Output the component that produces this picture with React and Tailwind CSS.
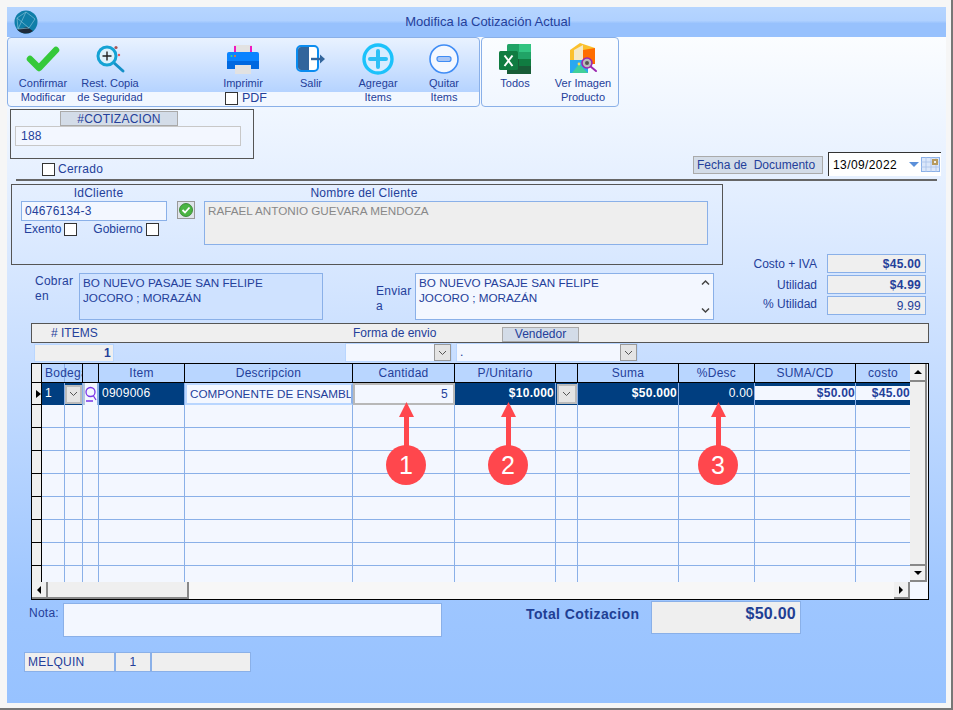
const navy = 'text-[#24409a]';

const rowGrid = 'grid grid-cols-[10px_23px_18px_16px_86px_168px_102px_101px_22px_101px_76px_101px_54px]';

const headers = ['', 'Bodega', '', 'Item', 'Descripcion', 'Cantidad', 'P/Unitario', '', 'Suma', '%Desc', 'SUMA/CD', 'costo'];
const columns = [0, 1, 2, 3, 4, 5, 6, 7, 8, 9, 10, 11, 12];

const emptyRows = ['h-[23px]', 'h-[23px]', 'h-[23px]', 'h-[23px]', 'h-[23px]', 'h-[23px]', 'h-[23px]', 'h-[16px]'];

const upper = 'text-[11.7px] tracking-normal';

function Check({ className = '' }) {
  return <span className={`block w-[13px] h-[13px] bg-white border border-[#333] shrink-0 ${className}`} />;
}

function ComboArrow({ className = '' }) {
  return (
    <span className={`flex items-center justify-center bg-[#e4e4e4] border border-[#999] shrink-0 ${className}`}>
      <svg width="9" height="6" viewBox="0 0 9 6" fill="none" stroke="#555" strokeWidth="1">
        <path d="M1 1l3.500 3.500L8 1" />
      </svg>
    </span>
  );
}

function ConfirmIcon() {
  return (
    <svg width="34" height="28" viewBox="0 0 34 28">
      <path d="M4 14l9 9L30 5" fill="none" stroke="#35c93a" strokeWidth="6.500" strokeLinecap="round" strokeLinejoin="round" />
    </svg>
  );
}

function RestoreIcon() {
  return (
    <svg width="32" height="30" viewBox="0 0 32 30">
      <path d="M19 18l10 9" stroke="#1590c8" strokeWidth="3" strokeLinecap="round" />
      <circle cx="13" cy="12" r="9" fill="#dff1fb" stroke="#15a2d4" strokeWidth="3" />
      <path d="M13 7.500v9M8.500 12h9" stroke="#222" strokeWidth="1.400" />
      <circle cx="22" cy="3.500" r="1.600" fill="#a55" />
      <circle cx="25" cy="11" r="1.200" fill="#e55" />
    </svg>
  );
}

function PrinterIcon() {
  return (
    <svg width="34" height="30" viewBox="0 0 34 30">
      <rect x="8" y="1" width="18" height="9" fill="#e2e2e2" />
      <rect x="8" y="2" width="2" height="7" fill="#f018c0" />
      <rect x="24" y="2" width="2" height="7" fill="#f018c0" />
      <path d="M3 8h28a2 2 0 0 1 2 2v13a2 2 0 0 1-2 2H3a2 2 0 0 1-2-2V10a2 2 0 0 1 2-2z" fill="#0a84ff" />
      <rect x="1" y="17" width="32" height="8" fill="#0068e0" />
      <rect x="9" y="21" width="16" height="9" fill="#e2e2e2" />
      <circle cx="5.500" cy="12" r="1" fill="#3ddc84" />
      <circle cx="9" cy="12" r="1" fill="#ff7a1a" />
    </svg>
  );
}

function ExitIcon() {
  return (
    <svg width="30" height="28" viewBox="0 0 30 28">
      <rect x="1" y="1" width="21" height="25" rx="4" fill="#fff" stroke="#0a8cf0" strokeWidth="2" />
      <path d="M2 5a3 3 0 0 1 3-3h8v23H5a3 3 0 0 1-3-3z" fill="#32659c" />
      <path d="M15 14h11" stroke="#32659c" strokeWidth="2.400" />
      <path d="M24 9.500l5 4.500-5 4.500z" fill="#32659c" />
    </svg>
  );
}

function PlusIcon() {
  return (
    <svg width="32" height="32" viewBox="0 0 32 32">
      <circle cx="16" cy="16" r="14" fill="#d7ecff" stroke="#1cc2fb" strokeWidth="3.400" />
      <path d="M16 8v16M8 16h16" stroke="#2cc0f6" strokeWidth="4" strokeLinecap="round" />
    </svg>
  );
}

function MinusIcon() {
  return (
    <svg width="30" height="30" viewBox="0 0 30 30">
      <circle cx="15" cy="15" r="14" fill="#f4f8ff" stroke="#3f8cf5" strokeWidth="1.600" />
      <rect x="8" y="12.500" width="14" height="5" rx="2.200" fill="#a9c6f5" stroke="#3f8cf5" strokeWidth="1.200" />
    </svg>
  );
}

function ExcelIcon() {
  return (
    <svg width="32" height="30" viewBox="0 0 32 30">
      <rect x="8" y="0" width="24" height="30" rx="1.500" fill="#21a366" />
      <rect x="20" y="0" width="12" height="8" fill="#33c481" />
      <rect x="20" y="8" width="12" height="7" fill="#21a366" />
      <rect x="20" y="15" width="12" height="7" fill="#107c41" />
      <rect x="8" y="15" width="12" height="7" fill="#185c37" />
      <rect x="8" y="22" width="24" height="8" fill="#185c37" />
      <rect x="0" y="7" width="19" height="19" rx="1.500" fill="#107c41" />
      <path d="M5.500 11.500l8 10.500M13.500 11.500l-8 10.500" stroke="#fff" strokeWidth="2" />
    </svg>
  );
}

function ImageIcon() {
  return (
    <svg width="32" height="32" viewBox="0 0 32 32">
      <path d="M3 7l10-7 15 5v15H3z" fill="#fbc02d" />
      <path d="M7 7l9-5v17H7z" fill="#f4e9c8" />
      <path d="M16 7l12-2v16H16z" fill="#ff6d00" />
      <rect x="3" y="17" width="18" height="13" fill="#29a8f0" />
      <path d="M5 30l7-9 9 9z" fill="#41cf9a" />
      <circle cx="12" cy="21" r="1.400" fill="#ffd54f" />
      <path d="M23 23l6 5" stroke="#9c27b0" strokeWidth="2" strokeLinecap="round" />
      <circle cx="20" cy="20" r="5" fill="#bbb" stroke="#9c27b0" strokeWidth="1.600" />
      <circle cx="20" cy="20" r="2" fill="#555" />
    </svg>
  );
}

function ToolButton({ icon, lines, className = '', children }) {
  return (
    <div className={`flex flex-col items-center text-[11px] leading-[14px] tracking-normal ${navy} ${className}`}>
      <div className="h-[33px] mt-[4px] flex items-center justify-center">{icon}</div>
      <div className="mt-[1px] text-center whitespace-nowrap">
        {lines.map((l) => (
          <div key={l}>{l}</div>
        ))}
      </div>
      {children}
    </div>
  );
}

function StatRow({ label, value, bold, labelClass = '' }) {
  return (
    <div className="flex items-center justify-end">
      <span className={`text-[12px] tracking-normal ${navy} mr-[10px] ${labelClass}`}>{label}</span>
      <div
        className={`w-[99px] h-[19px] bg-[#efefef] border border-[#8ab0e8] text-right pr-[4px] text-[12px] leading-[18px] ${navy} ${bold ? 'font-bold' : ''}`}
      >
        {value}
      </div>
    </div>
  );
}

function Callout({ n, className }) {
  return (
    <div className={`absolute top-[402px] w-[40px] flex flex-col items-center ${className}`}>
      <svg width="15" height="44" viewBox="0 0 15 44">
        <path d="M7.500 0L15 15H10V44H5V15H0z" fill="#ff474d" />
      </svg>
      <div className="w-[40px] h-[40px] -mt-[1px] rounded-full bg-[#ff474d] text-white text-[25px] tracking-normal leading-[40px] text-center">
        {n}
      </div>
    </div>
  );
}

function GridHeader() {
  return (
    <div className={`${rowGrid} h-[19px] border-b border-black`}>
      {headers.map((h, i) => (
        <div
          key={i}
          className={`border-r border-black text-[12px] leading-[18px] whitespace-nowrap overflow-hidden ${navy} ${
            i === 0 ? 'bg-[#efefef]' : 'bg-[#b9d6ff] text-center'
          } ${i === 1 ? 'col-span-2 text-left pl-[3px] bg-[linear-gradient(to_right,#b9d6ff_22px,#8ab0e8_22px,#8ab0e8_23px,#b9d6ff_23px)]' : ''} ${
            i === 11 ? 'border-r-0' : ''
          }`}
        >
          {h}
        </div>
      ))}
    </div>
  );
}

function SelectedRow() {
  const dark = 'bg-[#003e80] text-white border-r border-[#8ab0e8] text-[12px] leading-[21px] whitespace-nowrap overflow-hidden';
  return (
    <div className={`${rowGrid} h-[22px] border-b border-[#8ab0e8]`}>
      <div className="bg-[#efefef] border-r border-b border-black flex items-center justify-end">
        <span className="border-y-[4px] border-l-[5px] border-y-transparent border-l-black" />
      </div>
      <div className={`${dark} pl-[3px]`}>1</div>
      <div className={`${dark} flex items-center`}>
        <ComboArrow className="w-[17px] h-[19px] border-2 border-[#bbb]" />
      </div>
      <div className="bg-[#f3f7ff] border-x-2 border-[#b4c6de] border-r-[#8ab0e8] flex items-center justify-center">
        <svg width="12" height="16" viewBox="0 0 12 16" fill="none" stroke="#7a35e8" strokeWidth="1.300">
          <circle cx="5.500" cy="6" r="4.500" />
          <path d="M8.500 10l2.500 4M1 15h7" />
        </svg>
      </div>
      <div className={`${dark} pl-[3px]`}>0909006</div>
      <div className={`bg-[#f3f7ff] border-2 border-[#b9d6ff] border-r-[#8ab0e8] pl-[3px] leading-[18px] overflow-hidden whitespace-nowrap ${upper} ${navy}`}>
        COMPONENTE DE ENSAMBLE
      </div>
      <div className={`bg-[#f3f7ff] border-2 border-[#b8b8b8] text-right pr-[5px] text-[12px] leading-[18px] ${navy}`}>5</div>
      <div className={`${dark} text-right pr-[1px] font-bold`}>$10.000</div>
      <div className={`${dark} flex items-center justify-center`}>
        <ComboArrow className="w-[20px] h-[20px] border-2 border-[#bbb]" />
      </div>
      <div className={`${dark} text-right pr-[1px] font-bold`}>$50.000</div>
      <div className={`${dark} text-right pr-[1px]`}>0.00</div>
      <div className="border-r border-[#8ab0e8] bg-[#003e80] pt-[3px] pb-[4px]">
        <div className={`h-[14px] bg-[#f3f7ff] text-right font-bold text-[12px] leading-[14px] ${navy}`}>$50.00</div>
      </div>
      <div className="bg-[#003e80] pt-[3px] pb-[4px]">
        <div className={`h-[14px] bg-[#f3f7ff] text-right font-bold text-[12px] leading-[14px] ${navy}`}>$45.00</div>
      </div>
    </div>
  );
}

function ItemsGrid() {
  return (
    <div className="w-[898px] h-[237px] ml-[24px] border border-black flex flex-col">
      <div className="flex h-[218px]">
        <div className="w-[878px] bg-[#f3f7ff] overflow-hidden">
          <GridHeader />
          <SelectedRow />
          {emptyRows.map((h, r) => (
            <div key={r} className={`${rowGrid} ${h} ${r < 7 ? 'border-b border-[#8ab0e8]' : ''}`}>
              {columns.map((i) => (
                <div
                  key={i}
                  className={
                    i === 0
                      ? `bg-[#efefef] border-r border-black ${r < 7 ? 'border-b border-b-black -mb-[1px]' : ''}`
                      : i === 12
                        ? ''
                        : 'border-r border-[#8ab0e8]'
                  }
                />
              ))}
            </div>
          ))}
        </div>
        <div className="w-[18px] pr-[1px] flex flex-col bg-[#f3f7ff]">
          <div className="h-[18px] flex items-center justify-center bg-[#f0f0f0] border-b-2 border-r-2 border-[#888]">
            <span className="border-x-[4px] border-b-[4px] border-x-transparent border-b-black" />
          </div>
          <div className="flex-1 bg-[#efefef] border-b-2 border-r-2 border-[#888]" />
          <div className="h-[16px] flex items-center justify-center bg-[#f0f0f0] border-b-2 border-r-2 border-[#888]">
            <span className="border-x-[4px] border-t-[4px] border-x-transparent border-t-black" />
          </div>
        </div>
      </div>
      <div className="flex h-[17px] bg-[#f3f7ff]">
        <div className="w-[16px] flex items-center justify-center bg-[#f0f0f0] border-b-2 border-r-2 border-[#888]">
          <span className="border-y-[4px] border-r-[4px] border-y-transparent border-r-black" />
        </div>
        <div className="w-[141px] bg-[#efefef] border-b-2 border-r-2 border-[#888]" />
        <div className="flex-1 bg-[#f7f7f7]" />
        <div className="w-[16px] flex items-center justify-center bg-[#f0f0f0] border-b-2 border-r-2 border-[#888]">
          <span className="border-y-[4px] border-l-[4px] border-y-transparent border-l-black" />
        </div>
        <div className="w-[18px]" />
      </div>
    </div>
  );
}

export default function App() {
  return (
    <div
      className={`relative w-[953px] h-[710px] bg-[#f6f6f6] border-b-2 border-r-2 border-[#777] pt-[7px] pl-[7px] font-['Liberation_Sans',Arial,sans-serif] tracking-[0.25px] overflow-hidden`}
    >
      <div className="w-[939px] h-[696px] flex flex-col bg-[linear-gradient(#fbfdff_30px,#e6f0ff_170px,#c8deff_350px,#9ec6ff_590px,#97c2ff_696px)]">
        {/* title */}
        <div className="h-[30px] flex items-center shrink-0 bg-[linear-gradient(#b6d5ff,#b0d1ff_45%,#97c1fd_55%,#97c1fd)]">
          <svg className="ml-[7px]" width="24" height="24" viewBox="0 0 24 24">
            <circle cx="12" cy="12" r="11.500" fill="#0f7ea8" />
            <path d="M3 19.500a11.500 11.500 0 0 0 16 1.500l-6-4z" fill="#1f2a3a" />
            <path d="M3 8l9-6 9 7-6 9-11 1zM3 8l12 10M12 2L4 19" fill="none" stroke="#7fbdd6" strokeWidth="0.700" />
          </svg>
          <div className={`flex-1 text-center text-[13px] tracking-normal mr-[8px] ${navy}`}>Modifica la Cotización Actual</div>
        </div>

        {/* toolbar */}
        <div className="flex h-[70px] shrink-0">
          <div className="w-[473px] flex rounded-[4px] border border-[#8ab0e8] bg-[linear-gradient(#e9f2ff_0,#b5d3ff_54px,#f2f7ff_54px)]">
            <ToolButton className="w-[70px]" icon={<ConfirmIcon />} lines={['Confirmar', 'Modificar']} />
            <ToolButton className="w-[64px]" icon={<RestoreIcon />} lines={['Rest. Copia', 'de Seguridad']} />
            <div className="w-[68px]" />
            <ToolButton className="w-[66px]" icon={<PrinterIcon />} lines={['Imprimir']}>
              <div className="flex items-center gap-[4px] text-[12.500px] leading-[14px] mt-[1px] ml-[6px]">
                <Check />
                PDF
              </div>
            </ToolButton>
            <ToolButton className="w-[70px]" icon={<ExitIcon />} lines={['Salir']} />
            <ToolButton className="w-[64px]" icon={<PlusIcon />} lines={['Agregar', 'Items']} />
            <ToolButton className="w-[68px]" icon={<MinusIcon />} lines={['Quitar', 'Items']} />
          </div>
          <div className="w-[138px] ml-[1px] flex rounded-[4px] border border-[#8ab0e8]">
            <ToolButton className="w-[66px]" icon={<ExcelIcon />} lines={['Todos']} />
            <ToolButton className="w-[70px]" icon={<ImageIcon />} lines={['Ver Imagen', 'Producto']} />
          </div>
        </div>

        {/* cotizacion + fecha */}
        <div className="flex justify-between h-[72px] shrink-0">
          <div>
            <div className="w-[244px] h-[50px] ml-[3px] mt-[2px] border border-[#555] pt-[1px]">
              <div className={`w-[118px] h-[15px] ml-[49px] bg-[#d3dce8] border border-[#aaa] text-center text-[12px] leading-[14px] ${navy}`}>
                #COTIZACION
              </div>
              <div className={`w-[226px] h-[20px] ml-[4px] bg-[#f3f7ff] border border-[#c8c8c8] pl-[5px] text-[12px] leading-[18px] ${navy}`}>
                188
              </div>
            </div>
            <div className={`flex items-center gap-[3px] ml-[35px] mt-[4px] text-[12px] leading-[13px] ${navy}`}>
              <Check />
              Cerrado
            </div>
          </div>
          <div className="flex items-start mt-[45px] mr-[5px]">
            <div className={`w-[130px] h-[18px] mt-[4px] bg-[#d3dce8] border border-[#aaa] pl-[3px] text-[12px] tracking-normal leading-[17px] whitespace-pre ${navy}`}>
              Fecha de  Documento
            </div>
            <div className="w-[113px] h-[24px] ml-[5px] bg-white border-t border-l border-[#333] flex items-center pl-[4px] text-[12px] tracking-[0.4px] text-black">
              13/09/2022
              <span className="ml-auto mr-[1px] flex items-center gap-[2px] pl-[5px]">
                <span className="border-x-[5px] border-t-[5px] border-x-transparent border-t-[#5b8fd9]" />
                <svg width="19" height="15" viewBox="0 0 19 15">
                  <rect x="0.500" y="0.500" width="18" height="14" fill="#dbe7fa" stroke="#8ab0e8" />
                  <path d="M0 5h19M0 10h19M5 0v15M10 0v15M15 0v15" stroke="#a9c3ea" strokeWidth="0.800" />
                  <rect x="11" y="2" width="6" height="6" fill="#b79a5e" />
                  <rect x="13" y="4" width="2" height="2" fill="#eee" />
                </svg>
              </span>
            </div>
          </div>
        </div>

        <div className="h-[2px] w-[921px] ml-[9px] bg-[#666] shrink-0" />

        {/* client */}
        <div className="flex shrink-0 mt-[3px] h-[81px]">
          <div className="w-[712px] h-[81px] ml-[4px] border border-[#555] flex">
            <div className="w-[155px] ml-[9px] shrink-0">
              <div className={`text-center text-[12px] leading-[15px] mt-[1px] ${navy}`}>IdCliente</div>
              <div className={`w-[146px] h-[20px] bg-[#f3f7ff] border border-[#8ab0e8] pl-[3px] text-[12px] leading-[18px] ${navy}`}>
                04676134-3
              </div>
              <div className={`flex items-center text-[12px] tracking-normal leading-[16px] ${navy}`}>
                <span className="ml-[3px]">Exento</span>
                <Check className="ml-[3px]" />
                <span className="ml-[16px]">Gobierno</span>
                <Check className="ml-[3px]" />
              </div>
            </div>
            <div className="w-[18px] h-[18px] ml-[1px] mt-[16px] bg-[#dfe4ea] border border-[#999] flex items-center justify-center">
              <svg width="14" height="14" viewBox="0 0 14 14">
                <circle cx="7" cy="7" r="6.500" fill="#4bb543" stroke="#2c7a26" strokeWidth="0.800" />
                <path d="M3.500 7l2.500 2.500 4.500-5" fill="none" stroke="#fff" strokeWidth="1.800" />
              </svg>
            </div>
            <div className="ml-[9px]">
              <div className={`text-center text-[12px] leading-[15px] mt-[1px] pr-[184px] ${navy}`}>Nombre del Cliente</div>
              <div className={`w-[504px] h-[44px] bg-[#eeeeee] border border-[#8ab0e8] pl-[3px] leading-[18px] text-[#888] ${upper}`}>
                RAFAEL ANTONIO GUEVARA MENDOZA
              </div>
            </div>
          </div>
        </div>

        {/* addresses + stats */}
        <div className="flex shrink-0 h-[66px] -mt-[11px]">
          <div className="flex items-start ml-[28px] mt-[19px]">
            <div className={`w-[44px] text-[12px] leading-[15px] mt-[1px] ${navy}`}>
              Cobrar
              <br />
              en
            </div>
            <div className={`w-[244px] h-[47px] bg-[#cfe2ff] border border-[#8ab0e8] pl-[3px] pt-[1px] leading-[15px] ${upper} ${navy}`}>
              BO NUEVO PASAJE SAN FELIPE
              <br />
              JOCORO ; MORAZÁN
            </div>
            <div className={`w-[39px] ml-[53px] mt-[11px] text-[12px] leading-[15px] ${navy}`}>
              Enviar
              <br />a
            </div>
            <div className={`w-[299px] h-[47px] bg-[#f3f7ff] border border-[#8ab0e8] pl-[3px] pt-[1px] leading-[15px] flex justify-between ${upper} ${navy}`}>
              <div>
                BO NUEVO PASAJE SAN FELIPE
                <br />
                JOCORO ; MORAZÁN
              </div>
              <div className="w-[16px] -mt-[1px] flex flex-col justify-between items-center py-[5px]">
                <svg width="9" height="7" viewBox="0 0 9 7" fill="none" stroke="#444" strokeWidth="1.500">
                  <path d="M1 5.500L4.500 2 8 5.500" />
                </svg>
                <svg width="9" height="7" viewBox="0 0 9 7" fill="none" stroke="#444" strokeWidth="1.500">
                  <path d="M1 1.500L4.500 5 8 1.500" />
                </svg>
              </div>
            </div>
          </div>
          <div className="ml-auto mr-[20px] flex flex-col gap-[2px] w-[200px]">
            <StatRow label="Costo + IVA" value="$45.00" bold />
            <StatRow label="Utilidad" value="$4.99" bold />
            <StatRow label="% Utilidad" value="9.99" labelClass="-mt-[4px]" />
          </div>
        </div>

        {/* items bar */}
        <div className={`w-[898px] h-[20px] ml-[24px] mt-[3px] shrink-0 bg-[#efefef] border border-[#555] flex items-center text-[12px] tracking-normal ${navy}`}>
          <span className="ml-[19px] w-[302px]">#&nbsp;ITEMS</span>
          <span className="w-[149px]">Forma de envio</span>
          <span className="w-[77px] h-[15px] mt-[2px] bg-[#d3dce8] border border-[#aaa] text-center leading-[13px]">Vendedor</span>
        </div>

        <div className="flex h-[20px] shrink-0 ml-[27px]">
          <div className={`w-[80px] h-[18px] mt-[1px] bg-[#efefef] border border-[#b9d6ff] text-right pr-[2px] text-[12px] leading-[16px] font-bold ${navy}`}>1</div>
          <div className="w-[107px] h-[19px] ml-[231px] bg-[#f3f7ff] border border-[#b9d6ff] flex justify-end">
            <ComboArrow className="w-[17px] h-[17px]" />
          </div>
          <div className={`w-[182px] h-[19px] ml-[4px] bg-[#f3f7ff] border border-[#b9d6ff] flex justify-between pl-[3px] text-[12px] leading-[17px] ${navy}`}>
            .
            <ComboArrow className="w-[17px] h-[17px]" />
          </div>
        </div>

        <ItemsGrid />

        {/* footer */}
        <div className="flex shrink-0 mt-[1px] h-[36px]">
          <span className={`ml-[22px] mt-[3px] w-[34px] text-[12px] ${navy}`}>Nota:</span>
          <div className="w-[379px] h-[34px] mt-[2px] bg-[#f3f7ff] border border-[#8ab0e8]" />
          <span className="ml-[84px] mt-[3px] w-[125px] text-[14px] tracking-[0.4px] font-bold text-[#1f3f94]">Total Cotizacion</span>
          <div className="w-[150px] h-[33px] bg-[#efefef] border border-[#8ab0e8] text-right pr-[4px] text-[16px] leading-[24px] font-bold text-[#1f3f94]">
            $50.00
          </div>
        </div>

        <div className={`flex shrink-0 ml-[17px] mt-[15px] h-[20px] text-[12px] leading-[18px] ${navy}`}>
          <div className="w-[91px] bg-[#efefef] border border-[#8ab0e8] pl-[3px]">MELQUIN</div>
          <div className="w-[36px] bg-[#efefef] border border-[#8ab0e8] text-center">1</div>
          <div className="w-[100px] bg-[#efefef] border border-[#8ab0e8]" />
        </div>
      </div>

      <Callout n="1" className="left-[386px]" />
      <Callout n="2" className="left-[488px]" />
      <Callout n="3" className="left-[698px]" />
    </div>
  );
}
